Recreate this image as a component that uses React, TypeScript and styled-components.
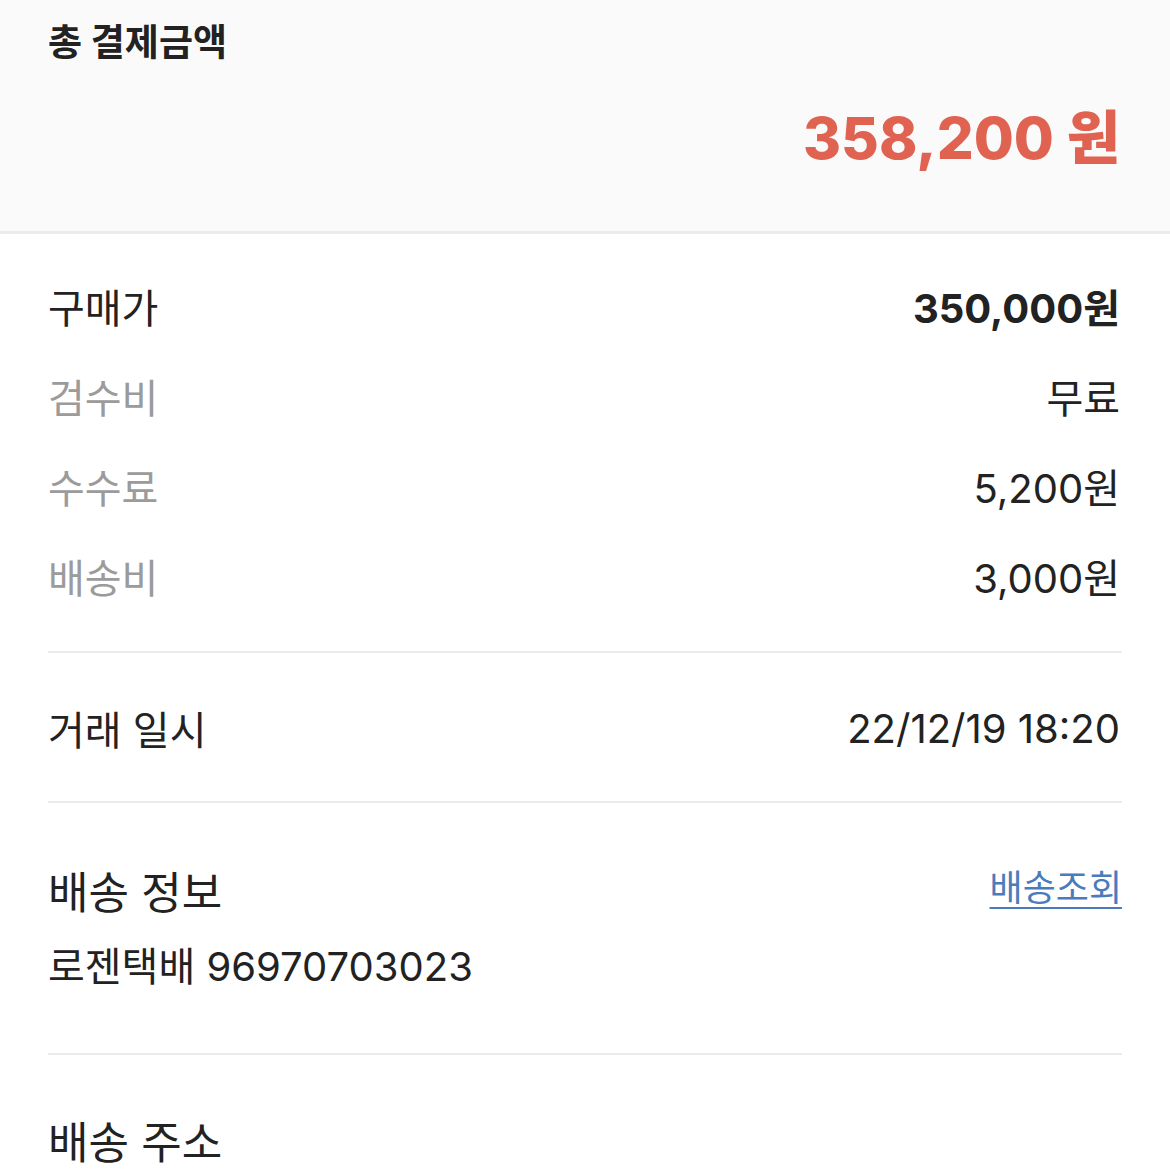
import React from "react";
import styled, { createGlobalStyle } from "styled-components";

const Global = createGlobalStyle`
  html, body { margin: 0; padding: 0; background: #ffffff; }
  body {
    font-family: Inter, "Noto Sans CJK KR", "Noto Sans", sans-serif;
    color: #222222;
    -webkit-font-smoothing: antialiased;
  }
`;

const Page = styled.div`
  width: 1170px;
  display: flex;
  flex-direction: column;
`;

const Header = styled.header`
  box-sizing: border-box;
  height: 234px;
  padding: 20px 50px 0 48px;
  background: #fafafa;
  border-bottom: 3px solid #ebebeb;
  display: flex;
  flex-direction: column;
`;

const HeaderTitle = styled.h1`
  margin: 0;
  font-size: 37px;
  line-height: 46px;
  font-weight: 700;
  color: #222222;
`;

const Total = styled.div`
  margin-top: 32px;
  align-self: flex-end;
  font-size: 58px;
  line-height: 80px;
  font-weight: 800;
  color: #e06352;
`;

const Body = styled.main`
  padding: 27px 48px 0 48px;
  display: flex;
  flex-direction: column;
`;

const Group = styled.section`
  display: flex;
  flex-direction: column;
`;

const Row = styled.div`
  height: 90px;
  display: flex;
  align-items: center;
  justify-content: space-between;
  font-size: 40px;
`;

const Label = styled.span<{ $muted?: boolean }>`
  color: ${(p) => (p.$muted ? "#9b9b9b" : "#222222")};
  font-weight: 400;
`;

const Value = styled.span<{ $bold?: boolean }>`
  color: #222222;
  font-weight: ${(p) => (p.$bold ? 700 : 400)};
  padding-right: 2px;
`;

const Divider = styled.hr<{ $top: number; $bottom: number }>`
  margin: ${(p) => p.$top}px 0 ${(p) => p.$bottom}px 0;
  border: none;
  height: 2px;
  background: #ebebeb;
`;

const Section = styled.section`
  display: flex;
  flex-direction: column;
`;

const SectionHead = styled.div`
  display: flex;
  align-items: center;
  justify-content: space-between;
`;

const SectionTitle = styled.h2`
  margin: 0;
  font-size: 44px;
  line-height: 50px;
  font-weight: 400;
  color: #222222;
`;

const TrackLink = styled.a`
  font-size: 36px;
  line-height: 44px;
  color: #4a7cbd;
  text-decoration: underline;
  text-underline-offset: 6px;
  text-decoration-thickness: 2px;
  margin-top: -10px;
`;

const Tracking = styled.div`
  margin-top: 24px;
  font-size: 40px;
  line-height: 50px;
  color: #222222;
`;

export default function App() {
  return (
    <Page>
      <Global />
      <Header>
        <HeaderTitle>총 결제금액</HeaderTitle>
        <Total>358,200 원</Total>
      </Header>
      <Body>
        <Group>
          <Row>
            <Label>구매가</Label>
            <Value $bold>350,000원</Value>
          </Row>
          <Row>
            <Label $muted>검수비</Label>
            <Value>무료</Value>
          </Row>
          <Row>
            <Label $muted>수수료</Label>
            <Value>5,200원</Value>
          </Row>
          <Row>
            <Label $muted>배송비</Label>
            <Value>3,000원</Value>
          </Row>
        </Group>
        <Divider $top={30} $bottom={30} />
        <Row>
          <Label>거래 일시</Label>
          <Value>22/12/19 18:20</Value>
        </Row>
        <Divider $top={28} $bottom={65} />
        <Section>
          <SectionHead>
            <SectionTitle>배송 정보</SectionTitle>
            <TrackLink href="#">배송조회</TrackLink>
          </SectionHead>
          <Tracking>로젠택배 96970703023</Tracking>
        </Section>
        <Divider $top={61} $bottom={63} />
        <Section>
          <SectionTitle>배송 주소</SectionTitle>
        </Section>
      </Body>
    </Page>
  );
}
